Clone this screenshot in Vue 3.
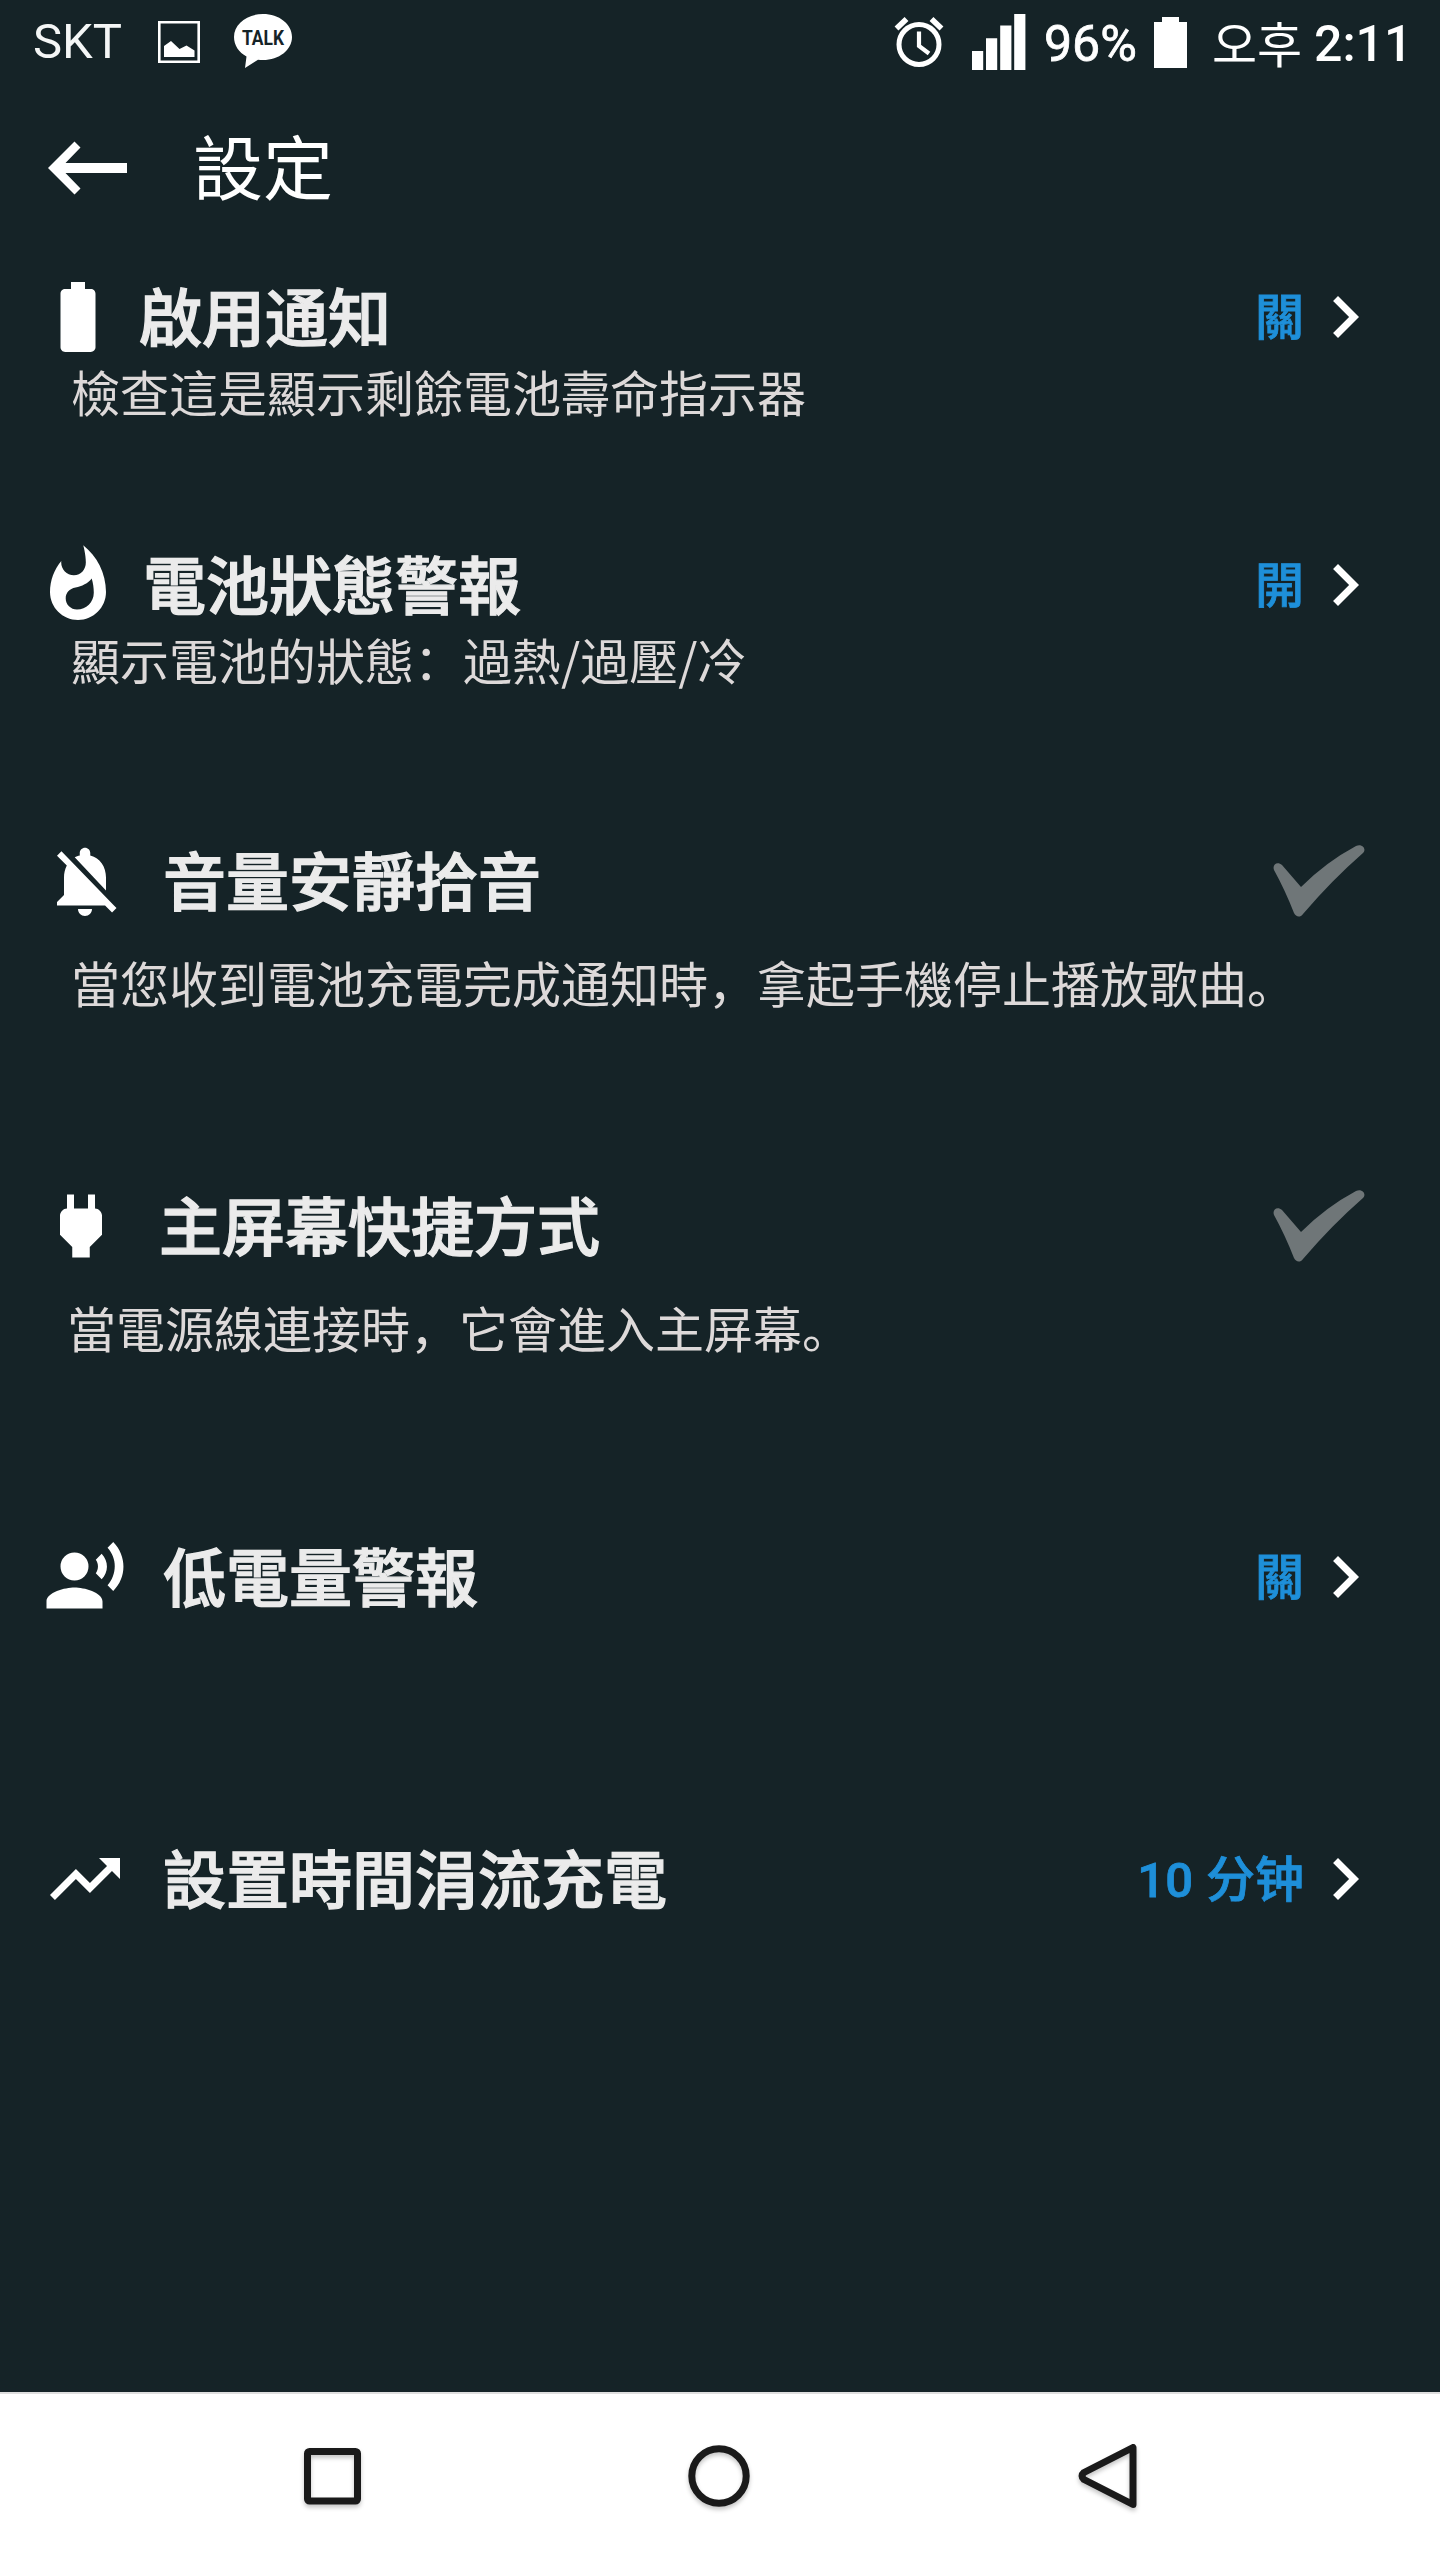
<script setup>
const icons = {
  battery: 'M15.67 4H14V2h-4v2H8.33C7.6 4 7 4.6 7 5.33v15.33C7 21.4 7.6 22 8.33 22h7.33c.74 0 1.34-.6 1.34-1.33V5.33C17 4.6 16.4 4 15.67 4z',
  fire: 'M13.5.67s.74 2.65.74 4.8c0 2.06-1.35 3.73-3.41 3.73-2.07 0-3.63-1.67-3.63-3.73l.03-.36C5.21 7.51 4 10.62 4 14c0 4.42 3.58 8 8 8s8-3.58 8-8C20 8.61 17.41 3.8 13.5.67zM11.71 19c-1.78 0-3.22-1.4-3.22-3.14 0-1.62 1.05-2.76 2.81-3.12 1.77-.36 3.6-1.21 4.62-2.58.39 1.29.59 2.65.59 4.04 0 2.65-2.15 4.8-4.8 4.8z',
  bellOff: 'M20 18.69L7.84 6.14 5.27 3.49 4 4.76l2.8 2.8v.01c-.52.99-.8 2.16-.8 3.42v5l-2 2v1h13.73l2 2L21 19.72l-1-1.03zM12 22c1.11 0 2-.89 2-2h-4c0 1.11.89 2 2 2zm6-7.32V11c0-3.08-1.64-5.64-4.5-6.32V4c0-.83-.67-1.5-1.5-1.5s-1.5.67-1.5 1.5v.68c-.15.03-.29.08-.42.12-.1.03-.2.07-.3.11h-.01c-.01 0-.01 0-.02.01-.23.09-.46.2-.68.31 0 0-.01 0-.01.01L18 14.68z',
  plug: 'M16.01 7L16 3h-2v4h-4V3H8v4h-.01C7 6.99 6 7.99 6 8.99v5.49L9.5 18v3h5v-3l3.5-3.51v-5.5c0-1-1-2-1.99-1.99z',
  voice: 'M9 5a4 4 0 1 0 0 8 4 4 0 0 0 0-8zM9 15c-2.67 0-8 1.34-8 4v2h16v-2c0-2.66-5.33-4-8-4zm7.76-9.64l-1.68 1.69c.84 1.18.84 2.71 0 3.89l1.68 1.69c2.02-2.02 2.02-5.07 0-7.27zM20.07 2l-1.63 1.63c2.77 3.02 2.77 7.56 0 10.74L20.07 16c3.9-3.89 3.91-9.95 0-14z',
  trend: 'M16 6l2.29 2.29-4.88 4.88-4-4L2 16.59 3.41 18l6-6 4 4 6.3-6.29L22 12V6z',
}

const items = [
  { id: 'notify', icon: 'battery', title: '啟用通知', desc: '檢查這是顯示剩餘電池壽命指示器', value: '關' },
  { id: 'condition', icon: 'fire', title: '電池狀態警報', desc: '顯示電池的狀態：過熱/過壓/冷', value: '開' },
  { id: 'silent', icon: 'bellOff', title: '音量安靜拾音', desc: '當您收到電池充電完成通知時，拿起手機停止播放歌曲。', check: true },
  { id: 'home', icon: 'plug', title: '主屏幕快捷方式', desc: '當電源線連接時，它會進入主屏幕。', check: true },
  { id: 'low', icon: 'voice', title: '低電量警報', value: '關' },
  { id: 'trickle', icon: 'trend', title: '設置時間涓流充電', number: '10', value: '分钟' },
]
</script>

<template>
  <div class="screen">
    <div class="status">
      <span class="carrier">SKT</span>
      <svg class="s-image" width="42" height="42" viewBox="0 0 42 42">
        <path d="M1.3 1.3h39.4v39.4H1.3z" fill="none" stroke="#fff" stroke-width="2.6" />
        <path d="M6 36V25l7-5 8.500 8 7-3.500 8 5V36z" fill="#fff" />
      </svg>
      <svg class="s-talk" width="58" height="56" viewBox="0 0 58 56">
        <path d="M29 0C13 0 0 10 0 23c0 8.500 5 15.500 12.500 19.500L11 54l13-8.300c1.700.2 3.300.3 5 .3 16 0 29-10 29-23S45 0 29 0z" fill="#fff" />
        <text x="29" y="31" text-anchor="middle" textLength="42" lengthAdjust="spacingAndGlyphs">TALK</text>
      </svg>
      <div class="status-right">
        <svg class="s-alarm" width="50" height="52" viewBox="0 0 50 52" fill="none" stroke="#fff">
          <circle cx="25" cy="28.500" r="20" stroke-width="5" />
          <path d="M25 15.500V30l10 7.500" stroke-width="4.200" />
          <path d="M2.500 12.500L12.500 3M47.500 12.500L37.500 3" stroke-width="5.600" />
        </svg>
        <svg class="s-signal" width="54" height="56" viewBox="0 0 54 56" fill="#fff">
          <path d="M0 37h11.200v19H0zM14 24.300h11.200V56H14zM28.200 11.500h11.200V56H28.200zM42.200 0h11.200v56H42.200z" />
        </svg>
        <span class="pct">96%</span>
        <svg class="s-batt" width="33" height="51" viewBox="0 0 33 51" fill="#fff">
          <path d="M8 0h17v5h8v46H0V5h8z" />
        </svg>
        <span class="ampm">오후</span>
        <span class="clock">2:11</span>
      </div>
    </div>

    <header class="header">
      <svg width="80" height="54" viewBox="0 0 80 54" fill="#fff">
        <path d="M0 27L26.500 0.500l6 6L17.500 22H79v10H17.500l15 15.500-6 6z" />
      </svg>
      <h1>設定</h1>
    </header>

    <main>
      <section v-for="item in items" :key="item.id" class="item" :class="item.id">
        <div class="row">
          <svg class="icon" width="84" height="84" viewBox="0 0 24 24" fill="#fff"><path :d="icons[item.icon]" fill-rule="evenodd" /></svg>
          <h2>{{ item.title }}</h2>
          <svg v-if="item.check" class="check" width="92" height="73" viewBox="0 0 92 73">
            <path d="M1 26C-1 21 4 17 9 21L28 43Q53 18 83 2C89-1 94 5 90 9Q59 36 30 70C27 74 23 73 21 69Q12 46 1 26z" />
          </svg>
          <template v-else>
            <span class="value"><b v-if="item.number">{{ item.number }}</b>{{ item.value }}</span>
            <svg class="chevron" width="84" height="84" viewBox="0 0 24 24" fill="#fff"><path d="M10 6L8.590 7.410 13.170 12l-4.580 4.590L10 18l6-6z" /></svg>
          </template>
        </div>
        <p v-if="item.desc">{{ item.desc }}</p>
      </section>
    </main>

    <nav class="nav">
      <svg class="n-recent" width="57" height="57" viewBox="0 0 57 57"><rect x="3.500" y="3.500" width="50" height="49.500" rx="2" /></svg>
      <svg class="n-home" width="62" height="62" viewBox="0 0 62 62"><circle cx="31" cy="31" r="27.200" /></svg>
      <svg class="n-back" width="58" height="66" viewBox="0 0 58 66"><path d="M54 4.500v57L5 36.500q-4-3.500 0-7z" /></svg>
    </nav>
  </div>
</template>

<style>
body {
  background: #152327;
}
</style>

<style scoped>
.screen {
  width: 1440px;
  height: 2560px;
  display: flex;
  flex-direction: column;
  background: #152327;
  color: #fff;
  font-family: "Noto Sans CJK SC", sans-serif;
  overflow: hidden;
}
svg {
  display: block;
  flex: none;
}
h1, h2, p {
  margin: 0;
  white-space: nowrap;
}
.status {
  height: 84px;
  display: flex;
  align-items: center;
  padding: 0 35px 0 33px;
  font-family: Roboto, sans-serif;
  font-size: 50px;
  line-height: 84px;
  box-sizing: border-box;
}
.carrier {
  width: 125px;
  color: #f4f6f6;
  font-weight: 400;
  font-size: 49px;
}
.s-talk {
  margin-left: 34px;
}
.s-talk text {
  font: 700 19.500px Roboto, sans-serif;
  fill: #152327;
}
.status-right {
  display: flex;
  align-items: center;
  margin-left: auto;
}
.s-signal {
  margin-left: 28px;
}
.pct {
  margin-left: 18px;
  width: 93px;
  padding-top: 4px;
  -webkit-text-stroke: 0.8px #fff;
}
.s-batt {
  margin-left: 17px;
}
.ampm {
  margin-left: 25px;
  width: 92px;
  font-family: "Noto Sans CJK KR", sans-serif;
  font-weight: 400;
  font-size: 49px;
  white-space: nowrap;
}
.clock {
  margin-left: 10px;
  width: 91px;
  padding-top: 4px;
  font-weight: 500;
}
.header {
  height: 168px;
  display: flex;
  align-items: center;
  padding-left: 48px;
}
h1 {
  margin-left: 65px;
  font-size: 70px;
  line-height: 84px;
  font-weight: 400;
  padding-bottom: 7px;
}
main {
  flex: 1;
}
.item {
  box-sizing: border-box;
  padding-left: 43px;
  padding-right: 53px;
}
.row {
  height: 84px;
  display: flex;
  align-items: center;
}
h2 {
  margin-left: 36px;
  margin-right: auto;
  color: #ebebeb;
  font-size: 63px;
  line-height: 84px;
  font-weight: 500;
  padding-bottom: 7px;
  -webkit-text-stroke: 1.3px #ebebeb;
}
.value {
  display: flex;
  align-items: baseline;
  gap: 13px;
  margin-right: -1px;
  color: #1e8fd9;
  font-size: 49px;
  line-height: 84px;
  font-weight: 500;
  padding-bottom: 6px;
  -webkit-text-stroke: 0.8px #1e8fd9;
}
.value b {
  font-family: Roboto, sans-serif;
  font-weight: 500;
}
.trickle .value {
  padding-bottom: 1px;
}
.check {
  margin-right: 22px;
  margin-bottom: 2px;
  fill: #6f7678;
}
p {
  margin-left: 28px;
  color: #ddd9d9;
  font-size: 49px;
  line-height: 70px;
  font-weight: 400;
}
.notify {
  height: 291px;
  padding-left: 36px;
  padding-top: 23px;
}
.condition {
  height: 296px;
  padding-left: 36px;
}
.notify h2 {
  margin-left: 19px;
}
.condition h2 {
  margin-left: 23px;
}
.notify p,
.condition p {
  margin-left: 35px;
  margin-top: -3px;
}
.silent {
  height: 345px;
}
.home {
  height: 351px;
  padding-left: 39px;
}
.silent p,
.home p {
  margin-top: 24px;
}
.low {
  height: 302px;
}
.nav {
  height: 168px;
  box-sizing: border-box;
  border-top: 2px solid #dedede;
  background: #fff;
  display: flex;
  align-items: center;
  padding-left: 304px;
  padding-bottom: 2px;
}
.nav svg {
  fill: none;
  stroke: #1a1a1a;
  stroke-width: 7;
  stroke-linejoin: round;
  overflow: visible;
  filter: drop-shadow(0 3px 2px rgba(0, 0, 0, 0.22));
}
.n-home {
  margin-left: 327px;
}
.n-back {
  margin-left: 329px;
}
</style>
